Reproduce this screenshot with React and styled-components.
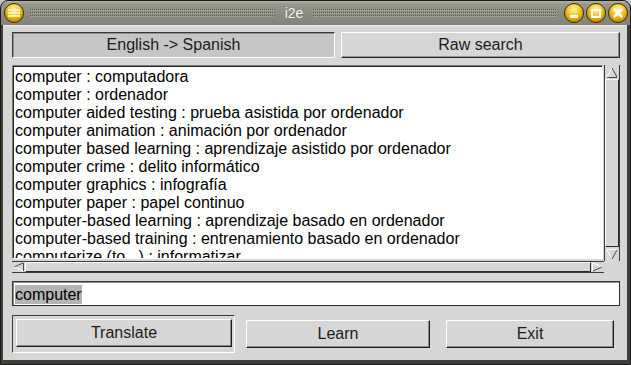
import React from 'react';
import styled, { createGlobalStyle } from 'styled-components';

const Global = createGlobalStyle`
  html, body { margin: 0; padding: 0; background: #c8c8c8; }
  body { font-family: "Liberation Sans", Arial, sans-serif; }
  * { box-sizing: border-box; }
`;

const Window = styled.div`
  width: 631px;
  height: 365px;
  display: flex;
  flex-direction: column;
  background: #3e3e3a;
  border: 1px solid #1a1a18;
  border-radius: 8px 8px 0 0;
  overflow: hidden;
`;

const TitleBar = styled.div`
  height: 24px;
  flex: none;
  display: flex;
  align-items: center;
  padding: 0 2px 0 3px;
  background: linear-gradient(#b2b2a6 0px, #98988c 3px, #8c8c80 12px, #84847a 24px);
`;

const Orb = styled.div`
  width: 20px;
  height: 20px;
  flex: none;
  border-radius: 50%;
  border: 1px solid #3a2c06;
  background: radial-gradient(circle at 50% 30%, #fff6b0 0%, #f7cc3c 35%, #e0a000 65%, #a87000 100%);
  display: flex;
  align-items: center;
  justify-content: center;
`;

const OrbGroup = styled.div`
  display: flex;
  gap: 2px;
`;

const GripSvg = styled.svg`
  flex: 1;
  height: 9px;
  margin: 0 6px;
  display: block;
`;

const Title = styled.div`
  color: #ffffff;
  font-size: 14px;
  line-height: 24px;
  text-shadow: 0 0 1px #55554c;
  padding: 0 4px;
`;

const Body = styled.div`
  flex: 1;
  margin: 0 3px 4px 2px;
  background: #d6d6d6;
  border-top: 1px solid #ececec;
  padding: 6px 7px 7px 9px;
  display: flex;
  flex-direction: column;
`;

const TabRow = styled.div`
  display: grid;
  grid-template-columns: 323px 1fr;
  column-gap: 6px;
  height: 26px;
`;

const Tab = styled.div`
  display: flex;
  align-items: center;
  justify-content: center;
  font-size: 16px;
  color: #1c1c1c;
  background: ${p => (p.$active ? '#c6c6c6' : '#d6d6d6')};
  border-style: solid;
  border-width: 1px;
  border-color: ${p =>
    p.$active ? '#3a3a3a #ffffff #ffffff #3a3a3a' : '#ffffff #2a2a2a #2a2a2a #ffffff'};
  box-shadow: ${p =>
    p.$active ? 'inset 1px 1px 0 #8e8e8e' : 'inset -1px -1px 0 #8e8e8e'};
`;

const ListFrame = styled.div`
  margin-top: 7px;
  height: 208px;
  display: grid;
  grid-template-columns: 1fr 16px;
  grid-template-rows: 1fr 12px;
`;

const List = styled.div`
  background: #ffffff;
  border-style: solid;
  border-width: 1px;
  border-color: #7a7a7a #ffffff #ffffff #7a7a7a;
  box-shadow: inset 1px 1px 0 #262626;
  padding: 2px 0 0 2px;
  overflow: hidden;
  margin-right: 1px;
  margin-bottom: 2px;
`;

const Line = styled.div`
  font-size: 16px;
  line-height: 18px;
  height: 18px;
  color: #000;
  white-space: nowrap;
`;

const VScroll = styled.div`
  display: flex;
  flex-direction: column;
  background: #c4c4c4;
  border-left: 1px solid #3a3a3a;
  border-right: 1px solid #3a3a3a;
`;

const HScroll = styled.div`
  display: flex;
  background: #c4c4c4;
  border-top: 1px solid #3a3a3a;
  border-bottom: 1px solid #3a3a3a;
`;

const Arrow = styled.div`
  flex: none;
  width: ${p => (p.$h ? '13px' : '100%')};
  height: ${p => (p.$h ? '100%' : '14px')};
  display: flex;
  align-items: center;
  justify-content: center;
  background: #d6d6d6;
`;

const Thumb = styled.div`
  flex: 1;
  background: #d6d6d6;
  border-style: solid;
  border-width: 1px;
  border-color: #ffffff #2a2a2a #2a2a2a #ffffff;
`;

const Input = styled.div`
  margin-top: 8px;
  height: 25px;
  background: #ffffff;
  border-style: solid;
  border-width: 1px;
  border-color: #3a3a3a #2a2a2a #2a2a2a #3a3a3a;
  box-shadow: inset 1px 1px 0 #8a8a8a;
  padding: 1px 0 0 2px;
  display: flex;
  align-items: center;
  font-size: 16px;
  color: #000;
`;

const Selected = styled.span`
  background: #b4b4b4;
  line-height: 19px;
`;

const ButtonRow = styled.div`
  margin-top: 9px;
  height: 38px;
  display: flex;
  align-items: center;
`;

const FocusFrame = styled.div`
  width: 223px;
  height: 38px;
  flex: none;
  border-style: solid;
  border-width: 1px;
  border-color: #3a3a3a #ffffff #ffffff #3a3a3a;
  padding: 3px 2px 4px 3px;
  display: flex;
`;

const Button = styled.div`
  flex: ${p => (p.$fill ? 1 : 'none')};
  width: ${p => (p.$w ? `${p.$w}px` : 'auto')};
  height: 28px;
  margin-left: ${p => p.$ml || 0}px;
  display: flex;
  align-items: center;
  justify-content: center;
  font-size: 16px;
  color: #1c1c1c;
  background: #d6d6d6;
  border-style: solid;
  border-width: 1px;
  border-color: #ffffff #1a1a1a #1a1a1a #ffffff;
  box-shadow: inset -1px -1px 0 #8a8a8a;
`;

const Grip = () => (
  <GripSvg>
    <defs>
      <pattern id="dots" width="2" height="3" patternUnits="userSpaceOnUse">
        <rect x="0" y="0" width="1" height="1" fill="#5f5f55" />
        <rect x="1" y="1" width="1" height="1" fill="#b4b4aa" />
      </pattern>
    </defs>
    <rect x="0" y="0" width="100%" height="9" fill="url(#dots)" />
  </GripSvg>
);

const TriUp = () => (
  <svg width="12" height="11" viewBox="0 0 12 11">
    <line x1="6" y1="1" x2="1" y2="10" stroke="#ffffff" />
    <line x1="6" y1="1" x2="11" y2="10" stroke="#4a4a4a" />
    <line x1="1" y1="10.5" x2="11" y2="10.5" stroke="#4a4a4a" />
  </svg>
);

const TriDown = () => (
  <svg width="12" height="11" viewBox="0 0 12 11">
    <line x1="1" y1="0.5" x2="11" y2="0.5" stroke="#ffffff" />
    <line x1="1" y1="1" x2="6" y2="10" stroke="#ffffff" />
    <line x1="11" y1="1" x2="6" y2="10" stroke="#4a4a4a" />
  </svg>
);

const TriLeft = () => (
  <svg width="11" height="10" viewBox="0 0 11 10">
    <line x1="1" y1="5" x2="10" y2="1" stroke="#4a4a4a" />
    <line x1="1" y1="5" x2="10" y2="9" stroke="#ffffff" />
    <line x1="10.5" y1="1" x2="10.5" y2="9" stroke="#4a4a4a" />
  </svg>
);

const TriRight = () => (
  <svg width="11" height="10" viewBox="0 0 11 10">
    <line x1="0.5" y1="1" x2="0.5" y2="9" stroke="#ffffff" />
    <line x1="1" y1="1" x2="10" y2="5" stroke="#ffffff" />
    <line x1="1" y1="9" x2="10" y2="5" stroke="#4a4a4a" />
  </svg>
);

const MenuGlyph = () => (
  <svg width="14" height="12" viewBox="0 0 14 12">
    <rect x="1" y="2" width="12" height="2" fill="#fff2b8" />
    <rect x="1" y="5" width="12" height="2" fill="#fff2b8" />
    <rect x="1" y="8" width="12" height="2" fill="#fff2b8" />
  </svg>
);

const MinGlyph = () => (
  <svg width="12" height="12" viewBox="0 0 12 12">
    <rect x="2" y="8" width="8" height="3" fill="#ffffff" />
  </svg>
);

const MaxGlyph = () => (
  <svg width="12" height="12" viewBox="0 0 12 12">
    <rect x="2" y="3" width="8" height="7" fill="none" stroke="#ffffff" strokeWidth="2" />
  </svg>
);

const CloseGlyph = () => (
  <svg width="12" height="12" viewBox="0 0 12 12">
    <path d="M2.5 2.5 L9.5 9.5 M9.5 2.5 L2.5 9.5" stroke="#ffffff" strokeWidth="2.6" strokeLinecap="round" />
  </svg>
);

const entries = [
  'computer : computadora',
  'computer : ordenador',
  'computer aided testing : prueba asistida por ordenador',
  'computer animation : animación por ordenador',
  'computer based learning : aprendizaje asistido por ordenador',
  'computer crime : delito informático',
  'computer graphics : infografía',
  'computer paper : papel continuo',
  'computer-based learning : aprendizaje basado en ordenador',
  'computer-based training : entrenamiento basado en ordenador',
  'computerize (to...) : informatizar',
];

export default function App() {
  return (
    <>
      <Global />
      <Window>
        <TitleBar>
          <Orb><MenuGlyph /></Orb>
          <Grip />
          <Title>i2e</Title>
          <Grip />
          <OrbGroup>
            <Orb><MinGlyph /></Orb>
            <Orb><MaxGlyph /></Orb>
            <Orb><CloseGlyph /></Orb>
          </OrbGroup>
        </TitleBar>
        <Body>
          <TabRow>
            <Tab $active>English -&gt; Spanish</Tab>
            <Tab>Raw search</Tab>
          </TabRow>
          <ListFrame>
            <List>
              {entries.map(e => (
                <Line key={e}>{e}</Line>
              ))}
            </List>
            <VScroll>
              <Arrow><TriUp /></Arrow>
              <Thumb />
              <Arrow><TriDown /></Arrow>
            </VScroll>
            <HScroll>
              <Arrow $h><TriLeft /></Arrow>
              <Thumb />
              <Arrow $h><TriRight /></Arrow>
            </HScroll>
          </ListFrame>
          <Input>
            <Selected>computer</Selected>
          </Input>
          <ButtonRow>
            <FocusFrame>
              <Button $fill>Translate</Button>
            </FocusFrame>
            <Button $w={184} $ml={11}>Learn</Button>
            <Button $w={168} $ml={16}>Exit</Button>
          </ButtonRow>
        </Body>
      </Window>
    </>
  );
}
